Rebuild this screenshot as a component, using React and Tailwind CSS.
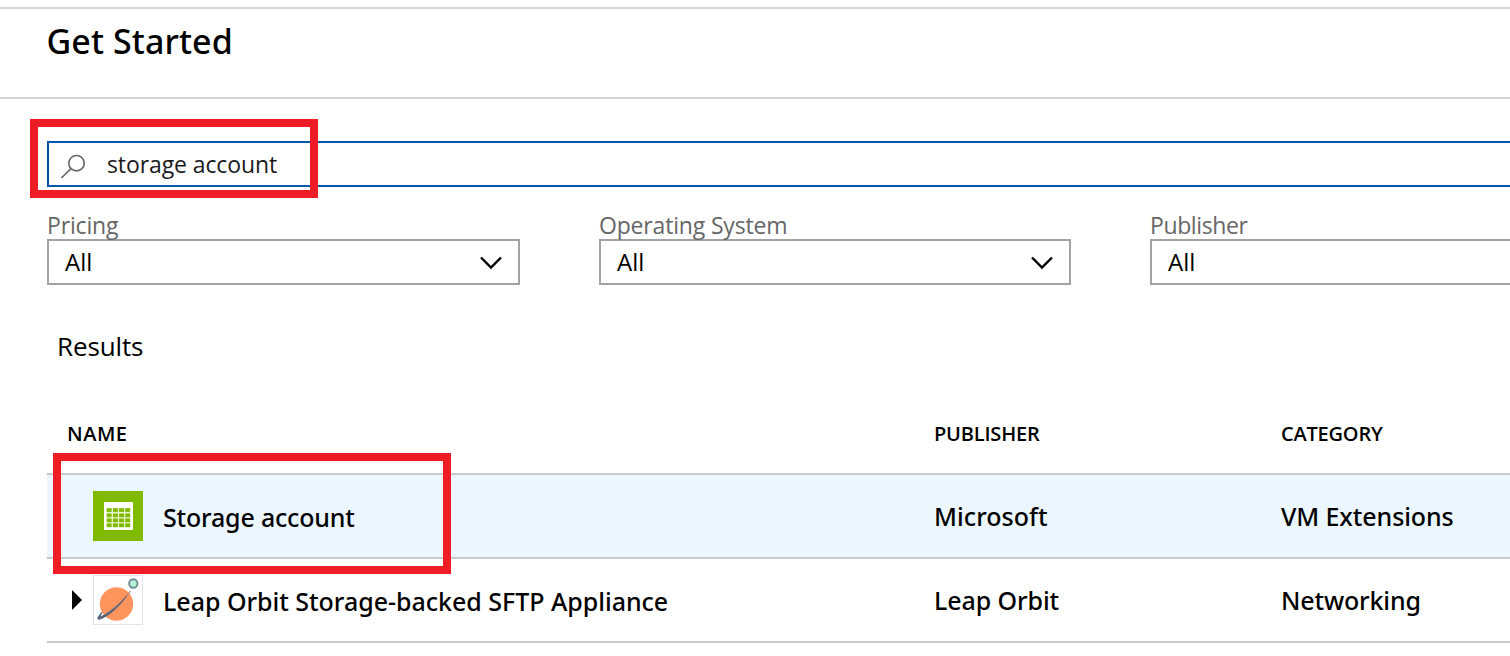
const filters = [
  { label: 'Pricing', box: 'w-[473px]', tracking: 'tracking-[-0.15px]' },
  { label: 'Operating System', box: 'w-[472px]', tracking: 'tracking-[-0.17px]' },
  { label: 'Publisher', box: 'w-[472px]', tracking: 'tracking-[-0.39px]' },
];

function SearchIcon() {
  return (
    <svg className="ml-[11px] h-[28px] w-[26px] shrink-0" viewBox="0 0 26 28" fill="none" stroke="#666" strokeWidth="1.6">
      <circle cx="16.5" cy="13.2" r="7.7" />
      <path d="M11 18.7 1.3 28" />
    </svg>
  );
}

function Chevron() {
  return (
    <svg className="mt-[2px] mr-[16px] h-[14px] w-[22px]" viewBox="0 0 22 14" fill="none" stroke="#000" strokeWidth="2.4">
      <path d="M1 1.5 11 11.5 21 1.5" />
    </svg>
  );
}

function StorageIcon() {
  const cols = [13.7, 20, 26.1, 32.2];
  const rows = [17.2, 22.5, 27.5, 32.4];
  return (
    <svg className="h-[50px] w-[50px] shrink-0" viewBox="0 0 50 50">
      <rect width="50" height="50" fill="#7fba00" />
      <rect x="11" y="11" width="29" height="28" rx="0.8" fill="#fff" />
      <rect x="13.7" y="17.2" width="23.8" height="19.2" fill="#e6f3c8" />
      {rows.map((y) =>
        cols.map((x) => <rect key={`${x}-${y}`} x={x} y={y} width="4.9" height="3.7" fill="#7fba00" />)
      )}
    </svg>
  );
}

function OrbitIcon() {
  return (
    <svg className="h-[50px] w-[50px] shrink-0" viewBox="0 0 50 50">
      <rect x="0.5" y="0.5" width="49" height="49" fill="#fff" stroke="#dfe5e6" />
      <circle cx="23.5" cy="29" r="16.7" fill="#ff945c" />
      <path d="M37.5 16C31 26 18 39 7.5 43" fill="none" stroke="#a08078" strokeWidth="1.1" />
      <path d="M33 21.5C26 32 15 41.5 6.5 44.2 3.8 45 4.3 42 9 37.3 7 41 7 42 9 41.2 16 38 26 30 33 21.5Z" fill="#56677a" stroke="#56677a" strokeWidth="1" />
      <circle cx="40.3" cy="8.5" r="4.2" fill="#b5f2d5" stroke="#6f8f96" strokeWidth="1.9" />
    </svg>
  );
}

const rows = [
  {
    name: 'Storage account', nameTracking: 'tracking-[-0.18px]', icon: <StorageIcon />, selected: true,
    publisher: 'Microsoft', pubTracking: 'tracking-[0.05px]',
    category: 'VM Extensions', catTracking: 'tracking-[-0.1px]',
  },
  {
    name: 'Leap Orbit Storage-backed SFTP Appliance', nameTracking: 'tracking-[-0.02px]', icon: <OrbitIcon />, expandable: true,
    publisher: 'Leap Orbit', pubTracking: 'tracking-[-0.1px]',
    category: 'Networking', catTracking: 'tracking-[-0.15px]',
  },
];

export default function App() {
  return (
    <div className="relative h-[656px] w-full overflow-hidden bg-white font-['Open_Sans',sans-serif] text-black">
      <header className="mt-[7px] h-[92px] border-y-2 border-[#d4d4d4] pt-2 pl-[46.5px]">
        <h1 className="font-['Noto_Sans',sans-serif] text-[34px] leading-[48px] font-medium tracking-[0.1px]">Get Started</h1>
      </header>

      <main className="pl-[47px]">
        <div className="mt-[42px] -mr-1 flex h-[46px] items-center border-2 border-[#0058ad]">
          <SearchIcon />
          <span className="ml-[21px] text-[23px] leading-[42px] tracking-[-0.1px] text-[#1a1a1a]">storage account</span>
        </div>

        <div className="mt-[22px] flex gap-[79px]">
          {filters.map((f) => (
            <div key={f.label} className={`shrink-0 ${f.box}`}>
              <div className={`h-[30px] text-[23px] leading-[32px] text-[#666] ${f.tracking}`}>{f.label}</div>
              <div className="flex h-[46px] items-center justify-between border-2 border-[#a3a3a3] pl-4">
                <span className="text-[24px] leading-[42px]">All</span>
                <Chevron />
              </div>
            </div>
          ))}
        </div>

        <h2 className="mt-[41px] pl-[10px] text-[26px] leading-[40px] tracking-[-0.13px]">Results</h2>

        <div className="mt-12 mb-[19px] grid grid-cols-[887px_347px_1fr] text-[20px] leading-[40px] font-semibold">
          <span className="pl-[20px] tracking-[0.5px]">NAME</span>
          <span className="tracking-[-0.19px]">PUBLISHER</span>
          <span className="tracking-[-0.2px]">CATEGORY</span>
        </div>

        <div className="border-b-2 border-[#cacaca] font-['Noto_Sans',sans-serif] text-[25px] font-medium">
          {rows.map((r) => (
            <div
              key={r.name}
              className={`grid h-[84px] grid-cols-[887px_347px_1fr] items-center border-t-2 border-[#cacaca] ${r.selected ? 'bg-[#ebf6ff]' : ''}`}
            >
              <div className="flex items-center">
                <div className="flex w-[46px] justify-end pr-[11px]">
                  {r.expandable && (
                    <svg className="h-[20px] w-[10px]" viewBox="0 0 10 20">
                      <path d="M0 0 10 10 0 20Z" />
                    </svg>
                  )}
                </div>
                {r.icon}
                <span className={`mt-[4px] ml-[20px] ${r.nameTracking}`}>{r.name}</span>
              </div>
              <span className={`mt-[2px] ${r.pubTracking}`}>{r.publisher}</span>
              <span className={`mt-[2px] ${r.catTracking}`}>{r.category}</span>
            </div>
          ))}
        </div>
      </main>

      <div className="absolute top-[119px] left-[30px] h-[79px] w-[288px] border-8 border-[#ee1c24]" />
      <div className="absolute top-[453px] left-[53px] h-[121px] w-[398px] border-8 border-[#ee1c24]" />
    </div>
  );
}
